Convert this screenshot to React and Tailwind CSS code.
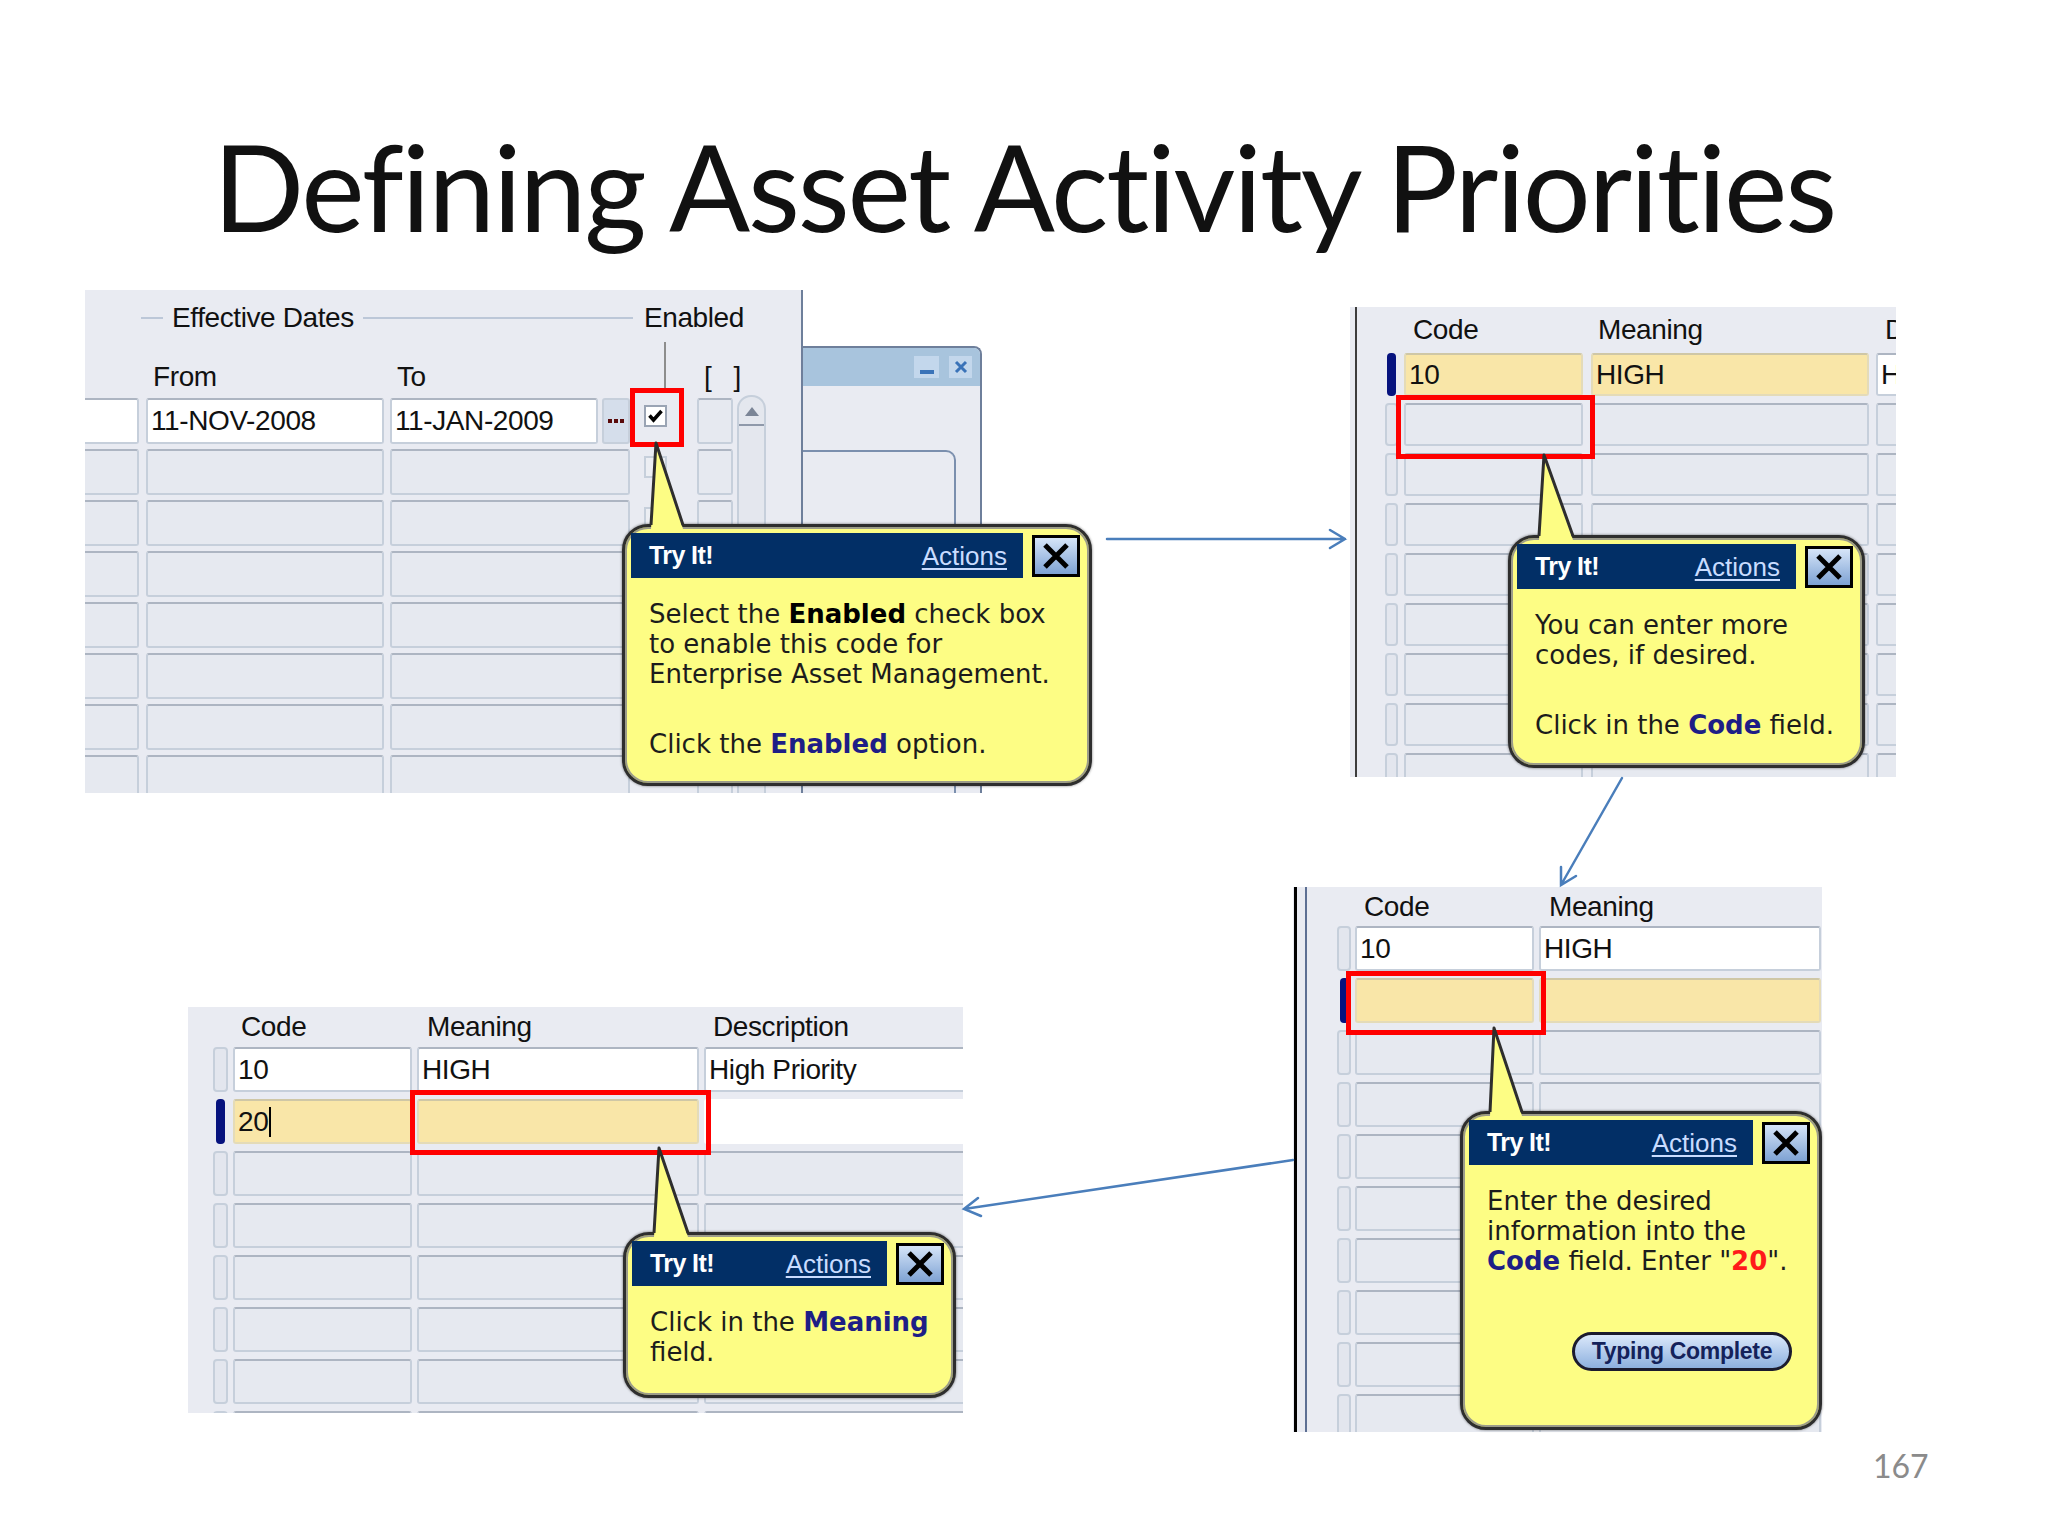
import clsx from "clsx";

const FORM = "font-['Liberation_Sans',Arial,sans-serif] tracking-[-0.4px]";

const Cell = ({ tone = "gray", className, children }) => (
  <div
    className={clsx(
      "flex h-full items-center overflow-hidden whitespace-nowrap rounded-[3px] border-2 pl-[3px] text-[28px] leading-none text-[#111]",
      tone === "gray" && "border-[#c6cfdb] border-t-[#adb5c2] bg-[#e6e9f0]",
      tone === "white" && "border-[#c6cfdb] border-t-[#adb5c2] bg-white",
      tone === "tan" && "border-[#e4dbb8] border-t-[#cfc7a6] bg-[#f9e6a8]",
      tone === "blank" && "border-white bg-white",
      className
    )}
  >
    {children}
  </div>
);

const Indicator = ({ active }) =>
  active ? (
    <div className="mx-auto h-full w-[9px] rounded-[4px] bg-[#06127e]" />
  ) : (
    <div className="h-full w-full rounded-[4px] border-2 border-[#c6cfdb] bg-[#e3e6ee]" />
  );

const RedBox = ({ className }) => (
  <div className={clsx("absolute border-[5px] border-[#ff0000]", className)} />
);

const CloseBox = () => (
  <div className="flex h-[42px] w-[48px] shrink-0 items-center justify-center self-center border-[3px] border-black bg-linear-to-b from-[#d6e5f8] to-[#7ea2d3]">
    <svg width="30" height="28" viewBox="0 0 30 28">
      <path d="M4 3 L26 25 M26 3 L4 25" stroke="#000" strokeWidth="5" />
    </svg>
  </div>
);

const TryIt = ({ className, pointer, children }) => (
  <div
    className={clsx(
      "absolute rounded-[26px] border-[3px] border-[#2e2e2e] bg-[#fdfd84] pl-[6px] pr-[9px] pt-[6px] shadow-[inset_0_0_0_2px_#9c9c8a,0_0_2px_1px_rgba(0,0,0,0.25)] font-['DejaVu_Sans',Verdana,sans-serif]",
      className
    )}
  >
    <svg className="absolute left-0 top-0 overflow-visible" width="1" height="1">
      <polygon points={pointer.fill} fill="#fdfd84" />
      <polyline points={pointer.line} fill="none" stroke="#2e2e2e" strokeWidth="3" strokeLinejoin="round" />
    </svg>
    <div className="flex h-[45px] gap-[9px]">
      <div className="flex flex-1 items-center bg-[#022f66] pl-[18px] pr-[16px] font-['Liberation_Sans',Arial,sans-serif] leading-none">
        <span className="text-[25px] font-bold tracking-[-0.6px] text-white">Try It!</span>
        <span className="ml-auto text-[26px] text-[#c9dcff] underline underline-offset-[3px]">Actions</span>
      </div>
      <CloseBox />
    </div>
    <div className="pl-[18px] pt-[21px] text-[26px] leading-[30px] text-[#1c1c1c]">{children}</div>
  </div>
);

const Check = ({ checked }) => (
  <div
    className={clsx(
      "flex h-[22px] w-[23px] items-center justify-center border-2",
      checked ? "border-[#9aa4b4] bg-white" : "border-[#c6cfdb] bg-[#eceef3]"
    )}
  >
    {checked && (
      <svg width="15" height="14" viewBox="0 0 15 14">
        <path d="M1.5 6.5 L5.5 11 L13.5 2" fill="none" stroke="#000" strokeWidth="3.5" />
      </svg>
    )}
  </div>
);

const rows8 = [0, 1, 2, 3, 4, 5, 6, 7];
const rows10 = [0, 1, 2, 3, 4, 5, 6, 7, 8, 9];

const DatesPanel = () => (
  <div className={clsx("absolute left-[85px] top-[290px] h-[503px] w-[718px] overflow-hidden border-r-2 border-[#6e7f9b] bg-[#e9ebf2] text-[#111]", FORM)}>
    <div className="flex h-[56px] items-center text-[28px] leading-none">
      <div className="ml-[56px] flex w-[492px] shrink-0 items-center">
        <div className="h-[2px] w-[22px] bg-[#bcc7d8]" />
        <span className="px-[9px]">Effective Dates</span>
        <div className="h-[2px] flex-1 bg-[#bcc7d8]" />
      </div>
      <span className="ml-[11px]">Enabled</span>
    </div>
    <div className="flex h-[52px] items-center pt-[10px] text-[28px] leading-none">
      <span className="ml-[68px] w-[244px] shrink-0">From</span>
      <span className="w-[247px] shrink-0">To</span>
      <div className="mt-[-14px] w-[23px] shrink-0 self-start">
        <div className="ml-[20px] h-[50px] w-[2px] bg-[#8d8d8d]" />
      </div>
      <span className="ml-[37px] whitespace-pre">[   ]</span>
    </div>
    <div className="flex">
      <div className="flex flex-col gap-[5px]">
        {rows8.map((i) => (
          <div key={i} className="flex h-[46px] *:shrink-0">
            <div className="ml-[-10px] w-[64px]">
              <Cell tone={i === 0 ? "white" : "gray"} />
            </div>
            <div className="ml-[7px] w-[238px]">
              <Cell tone={i === 0 ? "white" : "gray"}>{i === 0 && "11-NOV-2008"}</Cell>
            </div>
            {i === 0 ? (
              <>
                <div className="ml-[6px] w-[208px]">
                  <Cell tone="white">11-JAN-2009</Cell>
                </div>
                <div className="ml-[4px] flex w-[28px] items-center justify-center gap-[2px] rounded-[3px] border-2 border-[#c6cfdb] bg-[#d5deeb]">
                  <div className="h-[4px] w-[4px] bg-[#5a0a0a]" />
                  <div className="h-[4px] w-[4px] bg-[#5a0a0a]" />
                  <div className="h-[4px] w-[4px] bg-[#5a0a0a]" />
                </div>
              </>
            ) : (
              <div className="ml-[6px] w-[240px]">
                <Cell />
              </div>
            )}
            <div className="ml-[14px] w-[23px] pt-[7px]">
              <Check checked={i === 0} />
            </div>
            <div className="ml-[30px] w-[36px]">
              <Cell />
            </div>
          </div>
        ))}
      </div>
      <div className="ml-[4px] mt-[-3px] flex h-[420px] w-[29px] flex-col items-center rounded-t-[14px] border-2 border-[#c6cfdb] bg-[#e4e7ee] pt-[10px]">
        <svg width="14" height="9" viewBox="0 0 14 9">
          <polygon points="7,0 14,9 0,9" fill="#7b8596" />
        </svg>
        <div className="mt-[8px] h-[2px] w-full bg-[#8f99aa]" />
      </div>
    </div>
    <RedBox className="left-[545px] top-[98px] h-[59px] w-[54px]" />
  </div>
);

const WindowPiece = () => (
  <div className="absolute left-[803px] top-[346px] h-[447px] w-[179px] overflow-hidden rounded-tr-[8px] border-r-2 border-t-2 border-[#6e7f9b] bg-[#e9ebf2]">
    <div className="flex h-[38px] items-center justify-end gap-[10px] bg-[#a8c4dd] pr-[8px]">
      <div className="flex h-[22px] w-[25px] items-end justify-center bg-[#c3d7ec] pb-[4px]">
        <div className="h-[4px] w-[14px] bg-[#3a73b8]" />
      </div>
      <div className="flex h-[22px] w-[23px] items-center justify-center bg-[#c3d7ec]">
        <svg width="14" height="14" viewBox="0 0 14 14">
          <path d="M2 2 L12 12 M12 2 L2 12" stroke="#3a73b8" strokeWidth="3" />
        </svg>
      </div>
    </div>
    <div className="mt-[64px] h-[400px] w-[153px] rounded-tr-[10px] border-r-2 border-t-2 border-[#7b8fae]" />
  </div>
);

const CodesPanelTop = () => (
  <div className={clsx("absolute left-[1350px] top-[307px] h-[470px] w-[546px] overflow-hidden bg-[#e9ebf2] text-[#111]", FORM)}>
    <div className="ml-[5px] h-full border-l-2 border-[#3d3d3d]">
      <div className="flex h-[46px] items-center whitespace-nowrap text-[28px] leading-none *:shrink-0">
        <span className="ml-[56px] w-[185px]">Code</span>
        <span className="w-[287px]">Meaning</span>
        <span>Description</span>
      </div>
      <div className="flex flex-col gap-[7px]">
        {rows10.map((i) => (
          <div key={i} className="flex h-[43px] *:shrink-0">
            <div className="ml-[28px] w-[13px]">
              <Indicator active={i === 0} />
            </div>
            <div className="ml-[6px] w-[179px]">
              <Cell tone={i === 0 ? "tan" : "gray"}>{i === 0 && "10"}</Cell>
            </div>
            <div className="ml-[8px] w-[278px]">
              <Cell tone={i === 0 ? "tan" : "gray"}>{i === 0 && "HIGH"}</Cell>
            </div>
            <div className="ml-[7px] w-[60px]">
              <Cell tone={i === 0 ? "white" : "gray"}>{i === 0 && "HIGH"}</Cell>
            </div>
          </div>
        ))}
      </div>
    </div>
    <RedBox className="left-[46px] top-[88px] h-[64px] w-[199px]" />
  </div>
);

const CodesPanelRight = () => (
  <div className={clsx("absolute left-[1293px] top-[887px] h-[545px] w-[529px] overflow-hidden bg-[#e9ebf2] text-[#111]", FORM)}>
    <div className="ml-[1px] h-full border-l-[3px] border-black">
      <div className="ml-[8px] h-full border-l-2 border-[#5d6f93]">
        <div className="flex h-[39px] items-center whitespace-nowrap text-[28px] leading-none *:shrink-0">
          <span className="ml-[57px] w-[185px]">Code</span>
          <span>Meaning</span>
        </div>
        <div className="flex flex-col gap-[7px]">
          {rows10.map((i) => (
            <div key={i} className="flex h-[45px] *:shrink-0">
              <div className="ml-[30px] w-[14px]">
                <Indicator active={i === 1} />
              </div>
              <div className="ml-[4px] w-[179px]">
                <Cell tone={i === 0 ? "white" : i === 1 ? "tan" : "gray"}>{i === 0 && "10"}</Cell>
              </div>
              <div className="ml-[5px] w-[282px]">
                <Cell tone={i === 0 ? "white" : i === 1 ? "tan" : "gray"}>{i === 0 && "HIGH"}</Cell>
              </div>
            </div>
          ))}
        </div>
      </div>
    </div>
    <RedBox className="left-[53px] top-[84px] h-[64px] w-[200px]" />
  </div>
);

const CodesPanelBottom = () => (
  <div className={clsx("absolute left-[188px] top-[1007px] h-[406px] w-[775px] overflow-hidden bg-[#e9ebf2] text-[#111]", FORM)}>
    <div className="flex h-[40px] items-center whitespace-nowrap text-[28px] leading-none *:shrink-0">
      <span className="ml-[53px] w-[186px]">Code</span>
      <span className="w-[286px]">Meaning</span>
      <span>Description</span>
    </div>
    <div className="flex flex-col gap-[7px]">
      {rows8.map((i) => (
        <div key={i} className="flex h-[45px] *:shrink-0">
          <div className="ml-[25px] w-[15px]">
            <Indicator active={i === 1} />
          </div>
          <div className="ml-[5px] w-[179px]">
            <Cell tone={i === 0 ? "white" : i === 1 ? "tan" : "gray"}>
              {i === 0 && "10"}
              {i === 1 && (
                <>
                  20
                  <span className="ml-[1px] h-[30px] w-[2px] bg-black" />
                </>
              )}
            </Cell>
          </div>
          <div className="ml-[5px] w-[282px]">
            <Cell tone={i === 0 ? "white" : i === 1 ? "tan" : "gray"}>{i === 0 && "HIGH"}</Cell>
          </div>
          <div className="ml-[5px] w-[270px]">
            <Cell tone={i === 0 ? "white" : i === 1 ? "blank" : "gray"}>{i === 0 && "High Priority"}</Cell>
          </div>
        </div>
      ))}
    </div>
    <RedBox className="left-[222px] top-[83px] h-[65px] w-[301px]" />
  </div>
);

const Arrows = () => (
  <svg className="pointer-events-none absolute left-0 top-0" width="2048" height="1536" viewBox="0 0 2048 1536">
    <g fill="none" stroke="#4a7ebb" strokeWidth="2.5" strokeLinecap="round">
      <path d="M1107 539 L1345 539 M1330 530 L1345 539 L1330 548" />
      <path d="M1622 778 L1561 885 M1576 876 L1561 885 L1561 867" />
      <path d="M1293 1160 L964 1209 M981 1216 L964 1209 L978 1198" />
    </g>
  </svg>
);

export default function App() {
  return (
    <div className="relative h-[1536px] w-[2048px] overflow-hidden bg-white">
      <h1 className="w-full pt-[126px] text-center font-['Lato',sans-serif] text-[120px] font-normal leading-none tracking-[-2.2px] text-[#111] [font-variant-ligatures:none]">
        Defining Asset Activity Priorities
      </h1>

      <DatesPanel />
      <WindowPiece />
      <CodesPanelTop />
      <CodesPanelRight />
      <CodesPanelBottom />
      <Arrows />

      <TryIt className="left-[622px] top-[524px] h-[262px] w-[470px]" pointer={{ fill: "26,2 31,-84 58,2", line: "26,-2 31,-84 58,-2" }}>
        <p>
          Select the <b className="text-black">Enabled</b> check box
          <br />
          to enable this code for
          <br />
          Enterprise Asset Management.
        </p>
        <p className="mt-[40px]">
          Click the <b className="text-[#1e1e86]">Enabled</b> option.
        </p>
      </TryIt>

      <TryIt className="left-[1508px] top-[535px] h-[233px] w-[357px]" pointer={{ fill: "28,2 33,-83 62,2", line: "28,-2 33,-83 62,-2" }}>
        <p>
          You can enter more
          <br />
          codes, if desired.
        </p>
        <p className="mt-[40px]">
          Click in the <b className="text-[#1e1e86]">Code</b> field.
        </p>
      </TryIt>

      <TryIt className="left-[1460px] top-[1111px] h-[319px] w-[362px]" pointer={{ fill: "27,2 31,-86 59,2", line: "27,-2 31,-86 59,-2" }}>
        <p>
          Enter the desired
          <br />
          information into the
          <br />
          <b className="text-[#1e1e86]">Code</b> field. Enter "<b className="text-[#ff1a1a]">20</b>".
        </p>
        <div className="ml-[85px] mt-[56px] flex h-[39px] w-[220px] items-center justify-center rounded-full border-[3px] border-[#1b1b2e] bg-linear-to-b from-[#dbe8fa] to-[#8db0de] font-['Liberation_Sans',Arial,sans-serif] text-[23px] font-bold leading-none tracking-[-0.3px] text-[#14225a]">
          Typing Complete
        </div>
      </TryIt>

      <TryIt className="left-[623px] top-[1232px] h-[166px] w-[333px]" pointer={{ fill: "28,2 33,-87 62,2", line: "28,-2 33,-87 62,-2" }}>
        <p>
          Click in the <b className="text-[#1e1e86]">Meaning</b>
          <br />
          field.
        </p>
      </TryIt>

      <div className="absolute left-[1873px] top-[1450px] font-['Lato',sans-serif] text-[32px] leading-none text-[#8b8b8b]">167</div>
    </div>
  );
}
